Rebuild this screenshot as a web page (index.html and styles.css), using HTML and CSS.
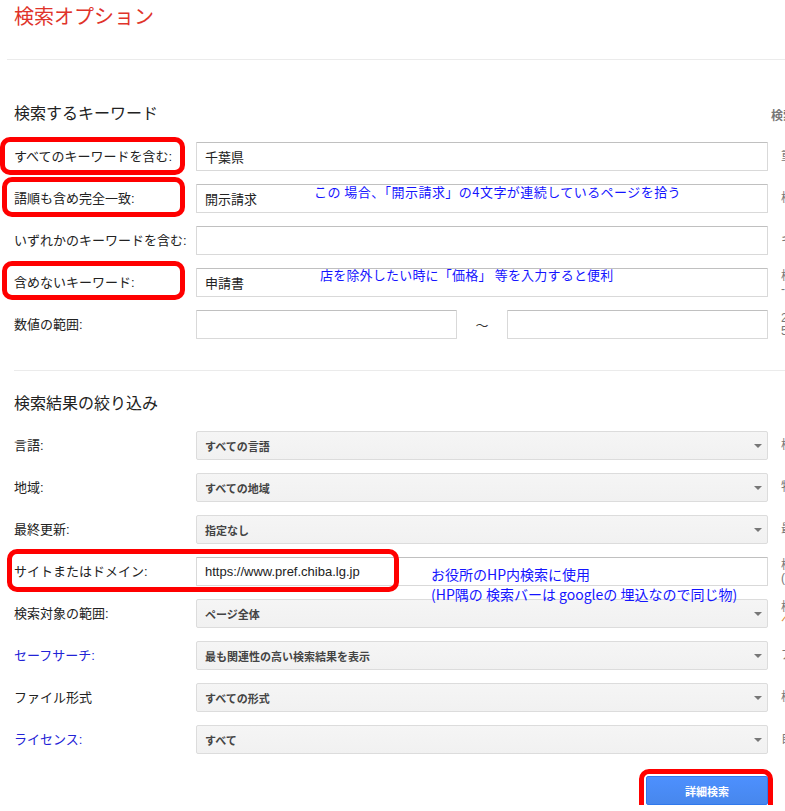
FILE: index.html
```html
<!DOCTYPE html>
<html lang="ja">
<head>
<meta charset="utf-8">
<title>検索オプション</title>
<link rel="stylesheet" href="styles.css">
</head>
<body>
<div class="page">
  <h1 class="title">検索オプション</h1>
  <div class="rule rule-wide"></div>

  <section class="section section-keywords">
    <div class="section-head">
      <h2>検索するキーワード</h2>
      <span class="tips-head">検索ボックスでの指定方法</span>
    </div>
    <div class="rows">
      <div class="row">
        <label class="label">すべてのキーワードを含む:</label>
        <input class="field" type="text" value="千葉県">
        <p class="hint">重要なキーワードを入力します: 千葉県 観光</p>
        <span class="mark mark-all"></span>
      </div>
      <div class="row">
        <label class="label">語順も含め完全一致:</label>
        <input class="field" type="text" value="開示請求">
        <p class="hint">検索するキーワードを二重引用符で囲みます: "開示請求"</p>
        <span class="mark mark-exact"></span>
        <span class="note note-exact">この 場合、「開示請求」の4文字が連続しているページを拾う</span>
      </div>
      <div class="row">
        <label class="label">いずれかのキーワードを含む:</label>
        <input class="field" type="text" value="">
        <p class="hint">キーワードの間に OR を挿入します: 小型 OR 標準</p>
      </div>
      <div class="row">
        <label class="label">含めないキーワード:</label>
        <input class="field" type="text" value="申請書">
        <p class="hint">検索から除外するキーワードの先頭にマイナス記号 (-) を付けます:<br>-げっ歯類, -"ジャック ラッセル"</p>
        <span class="mark mark-exclude"></span>
        <span class="note note-exclude">店を除外したい時に「価格」 等を入力すると便利</span>
      </div>
      <div class="row">
        <label class="label">数値の範囲:</label>
        <div class="range">
          <input class="field field-half" type="text" value="">
          <span class="tilde">～</span>
          <input class="field field-half" type="text" value="">
        </div>
        <p class="hint">2 つの数値の間にピリオドを 2 つ挿入し、単位を付記します:<br>5..10 kg, ¥3000..¥5000, 2010..2011</p>
      </div>
    </div>
  </section>

  <div class="rule rule-inner"></div>

  <section class="section section-refine">
    <div class="section-head">
      <h2>検索結果の絞り込み</h2>
    </div>
    <div class="rows">
      <div class="row">
        <label class="label">言語:</label>
        <div class="select"><span>すべての言語</span><svg class="arrow" width="8" height="4" viewBox="0 0 8 4"><path d="M0 0h8L4 4z"/></svg></div>
        <p class="hint">検索対象とするページの言語を選択します。</p>
      </div>
      <div class="row">
        <label class="label">地域:</label>
        <div class="select"><span>すべての地域</span><svg class="arrow" width="8" height="4" viewBox="0 0 8 4"><path d="M0 0h8L4 4z"/></svg></div>
        <p class="hint">特定の地域に属するページのみを検索します。</p>
      </div>
      <div class="row">
        <label class="label">最終更新:</label>
        <div class="select"><span>指定なし</span><svg class="arrow" width="8" height="4" viewBox="0 0 8 4"><path d="M0 0h8L4 4z"/></svg></div>
        <p class="hint">最終更新日時が指定の範囲に該当するページを検索します。</p>
      </div>
      <div class="row">
        <label class="label">サイトまたはドメイン:</label>
        <input class="field" type="text" value="https://www.pref.chiba.lg.jp">
        <p class="hint">検索範囲として、1 つのサイト (wikipedia.org など) またはドメイン<br>(.edu、.org、.gov など) を指定します。</p>
        <span class="mark mark-site"></span>
        <span class="note note-site">お役所のHP内検索に使用<br>(HP隅の 検索バーは googleの 埋込なので同じ物)</span>
      </div>
      <div class="row">
        <label class="label">検索対象の範囲:</label>
        <div class="select"><span>ページ全体</span><svg class="arrow" width="8" height="4" viewBox="0 0 8 4"><path d="M0 0h8L4 4z"/></svg></div>
        <p class="hint">検索対象とするキーワードの位置を指定します。<br><span class="hint-link">ページ全体、ページ タイトル、URL</span></p>
      </div>
      <div class="row">
        <label class="label label-link">セーフサーチ:</label>
        <div class="select"><span>最も関連性の高い検索結果を表示</span><svg class="arrow" width="8" height="4" viewBox="0 0 8 4"><path d="M0 0h8L4 4z"/></svg></div>
        <p class="hint">アダルト コンテンツを除外するかどうかを指定します。</p>
      </div>
      <div class="row">
        <label class="label">ファイル形式</label>
        <div class="select"><span>すべての形式</span><svg class="arrow" width="8" height="4" viewBox="0 0 8 4"><path d="M0 0h8L4 4z"/></svg></div>
        <p class="hint">検索対象とするファイル形式を指定します。</p>
      </div>
      <div class="row">
        <label class="label label-link">ライセンス:</label>
        <div class="select"><span>すべて</span><svg class="arrow" width="8" height="4" viewBox="0 0 8 4"><path d="M0 0h8L4 4z"/></svg></div>
        <p class="hint">自由に使用できるページを検索します。</p>
      </div>
    </div>
    <div class="actions">
      <div class="action-wrap">
        <button class="submit" type="button">詳細検索</button>
        <span class="mark mark-button"></span>
      </div>
    </div>
  </section>
</div>
</body>
</html>
```

FILE: styles.css
```css
html, body {
  margin: 0;
  padding: 0;
  overflow: hidden;
  background: #ffffff;
}

body {
  font-family: "Liberation Sans", "Noto Sans CJK JP", sans-serif;
  color: #222222;
}

.page {
  padding-left: 14px;
}

.title {
  margin: 0;
  padding-top: 5px;
  font-size: 20px;
  line-height: 24px;
  font-weight: normal;
  color: #e0332a;
}

.rule {
  height: 0;
  border-top: 1px solid #ebebeb;
}

.rule-wide {
  margin-top: 30px;
  margin-left: -7px;
}

.rule-inner {
  margin-top: 31px;
}

.section-head {
  display: grid;
  grid-template-columns: 757px max-content;
  align-items: center;
  height: 20px;
}

.section-head h2 {
  margin: 0;
  font-size: 16px;
  line-height: 20px;
  font-weight: normal;
  color: #222222;
  white-space: nowrap;
}

.tips-head {
  font-size: 12px;
  font-weight: bold;
  color: #777777;
  white-space: nowrap;
}

.section-keywords .section-head {
  margin-top: 44px;
}

.section-keywords .rows {
  margin-top: 18px;
}

.section-refine .section-head {
  margin-top: 23px;
}

.section-refine .rows {
  margin-top: 17px;
}

.rows {
  display: flex;
  flex-direction: column;
  gap: 13px;
}

.row {
  position: relative;
  display: grid;
  grid-template-columns: 182px 572px 420px;
  align-items: center;
  height: 29px;
}

.label {
  font-size: 13px;
  line-height: 16px;
  color: #222222;
  white-space: nowrap;
}

.label-link {
  color: #2222d6;
}

.field {
  box-sizing: border-box;
  width: 572px;
  height: 29px;
  margin: 0;
  padding: 0 8px;
  border: 1px solid #d9d9d9;
  border-top-color: #c0c0c0;
  border-radius: 1px;
  background: #ffffff;
  font-family: "Liberation Sans", "Noto Sans CJK JP", sans-serif;
  font-size: 13px;
  color: #222222;
  outline: none;
}

.range {
  display: flex;
  align-items: center;
  width: 572px;
}

.field-half {
  width: 261px;
}

.tilde {
  flex: 1;
  text-align: center;
  font-family: "Noto Sans CJK JP", sans-serif;
  font-size: 13px;
  color: #333333;
}

.select {
  box-sizing: border-box;
  display: flex;
  align-items: center;
  justify-content: space-between;
  width: 572px;
  height: 29px;
  padding: 0 5px 0 8px;
  border: 1px solid #dcdcdc;
  border-radius: 2px;
  background: linear-gradient(#f5f5f5, #f1f1f1);
  font-size: 11px;
  font-weight: bold;
  color: #444444;
  white-space: nowrap;
}

.arrow {
  fill: #777777;
}

.hint {
  margin: 0;
  padding-left: 13px;
  font-size: 12px;
  line-height: 13px;
  color: #777777;
  white-space: nowrap;
}

.hint-link {
  color: #dd8a3a;
}

.mark {
  position: absolute;
  box-sizing: border-box;
  border: 5px solid #ff0000;
  border-radius: 10px;
  pointer-events: none;
  z-index: 2;
}

.mark-all {
  left: -14px;
  top: -5px;
  width: 185px;
  height: 38px;
}

.mark-exact {
  left: -12px;
  top: -7px;
  width: 183px;
  height: 40px;
}

.mark-exclude {
  left: -12px;
  top: -7px;
  width: 183px;
  height: 39px;
}

.mark-site {
  left: -7px;
  top: -8px;
  width: 392px;
  height: 43px;
}

.note {
  position: absolute;
  font-family: "Noto Sans CJK JP", sans-serif;
  color: #1414ff;
  white-space: nowrap;
  z-index: 3;
  pointer-events: none;
}

.note-exact {
  left: 300px;
  top: 0px;
  font-size: 13px;
  line-height: 16px;
  letter-spacing: 0.45px;
}

.note-exclude {
  left: 306px;
  top: -1px;
  font-size: 13px;
  line-height: 16px;
  letter-spacing: 0.2px;
}

.note-site {
  left: 417px;
  top: 7px;
  font-size: 14px;
  line-height: 20px;
}

.actions {
  display: flex;
  justify-content: flex-end;
  width: 754px;
  margin-top: 22px;
}

.action-wrap {
  position: relative;
}

.submit {
  display: block;
  box-sizing: border-box;
  width: 122px;
  height: 29px;
  margin: 0;
  padding: 0;
  border: 1px solid #3079ed;
  border-radius: 2px;
  background: linear-gradient(#4d90fe, #4787ed);
  font-family: "Liberation Sans", "Noto Sans CJK JP", sans-serif;
  font-size: 11px;
  font-weight: bold;
  color: #ffffff;
}

.mark-button {
  left: -7px;
  top: -7px;
  width: 134px;
  height: 48px;
}
```
